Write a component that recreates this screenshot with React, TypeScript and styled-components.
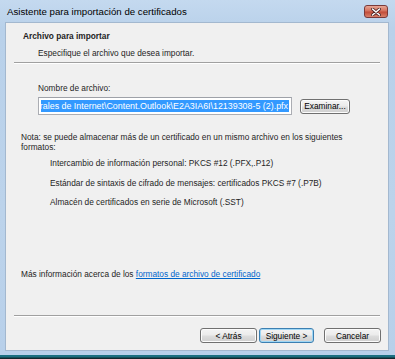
import React from "react";
import styled, { createGlobalStyle } from "styled-components";

const GlobalStyle = createGlobalStyle`
  html, body {
    margin: 0;
    padding: 0;
    background: #1b1b1b;
  }
  body {
    font-family: "Liberation Sans", Arial, sans-serif;
    font-size: 8.3px;
    color: #1e1e1e;
  }
`;

const formats = [
  "Intercambio de información personal: PKCS #12 (.PFX,.P12)",
  "Estándar de sintaxis de cifrado de mensajes: certificados PKCS #7 (.P7B)",
  "Almacén de certificados en serie de Microsoft (.SST)",
];

export default function App() {
  return (
    <>
      <GlobalStyle />
      <Window>
        <TitleBar>
          <Title>Asistente para importación de certificados</Title>
          <CloseButton>
            <svg width="10" height="8" viewBox="0 0 10 8">
              <path d="M1.5 1 L8.5 7 M8.5 1 L1.5 7" stroke="#4a2020" strokeWidth="3" strokeLinecap="round" />
              <path d="M1.5 1 L8.5 7 M8.5 1 L1.5 7" stroke="#ffffff" strokeWidth="1.6" strokeLinecap="round" />
            </svg>
          </CloseButton>
        </TitleBar>
        <Client>
          <Header>
            <HeaderTitle>Archivo para importar</HeaderTitle>
            <HeaderText>Especifique el archivo que desea importar.</HeaderText>
          </Header>
          <Separator />
          <Body>
            <FieldLabel>Nombre de archivo:</FieldLabel>
            <FieldRow>
              <FileInput>
                <Selected>rales de Internet\Content.Outlook\E2A3IA6I\12139308-5 (2).pfx</Selected>
              </FileInput>
              <Button $width={50}>Examinar...</Button>
            </FieldRow>
            <Note>
              Nota: se puede almacenar más de un certificado en un mismo archivo en los siguientes formatos:
            </Note>
            <FormatList>
              {formats.map((f) => (
                <FormatItem key={f}>{f}</FormatItem>
              ))}
            </FormatList>
            <MoreInfo>
              Más información acerca de los <Link>formatos de archivo de certificado</Link>
            </MoreInfo>
          </Body>
          <Separator />
          <Footer>
            <Button $width={57}>&lt; Atrás</Button>
            <Button $width={55} $focused>
              Siguiente &gt;
            </Button>
            <Button $width={57} $gap={8}>
              Cancelar
            </Button>
          </Footer>
        </Client>
      </Window>
      <Taskbar />
    </>
  );
}

const Window = styled.div`
  width: 395px;
  height: 355px;
  box-sizing: border-box;
  display: flex;
  flex-direction: column;
  background: linear-gradient(180deg, #c4d9ef 0%, #b9d1ea 8%, #bcd3eb 60%, #b8d0ea 100%);
  padding: 0 6px 4px 5px;
`;

const TitleBar = styled.div`
  height: 22px;
  display: flex;
  align-items: flex-start;
  justify-content: space-between;
`;

const Title = styled.div`
  font-size: 9.7px;
  color: #000;
  padding: 6px 0 0 2px;
  line-height: 12px;
`;

const CloseButton = styled.div`
  width: 24px;
  height: 13px;
  margin: 5px 1px 0 0;
  box-sizing: border-box;
  border: 1px solid #7a3a3a;
  border-radius: 3px;
  background: linear-gradient(180deg, #e7a695 0%, #d4705c 45%, #c24d3a 55%, #d8806a 100%);
  display: flex;
  align-items: center;
  justify-content: center;
`;

const Client = styled.div`
  flex: 1;
  background: #f0f0f0;
  display: flex;
  flex-direction: column;
  border: 1px solid #a3b8cf;
  box-sizing: border-box;
`;

const Header = styled.div`
  height: 39px;
  padding: 8px 0 0 17px;
  box-sizing: border-box;
`;

const HeaderTitle = styled.div`
  font-weight: bold;
  line-height: 10px;
  font-size: 8.3px;
`;

const HeaderText = styled.div`
  line-height: 10px;
  margin: 7px 0 0 15px;
`;

const Separator = styled.div`
  height: 1px;
  margin: 0 8px 0 8px;
  background: #a0a0a0;
  border-bottom: 1px solid #ffffff;
`;

const Body = styled.div`
  flex: 1;
  padding: 19px 0 0 15px;
`;

const FieldLabel = styled.div`
  line-height: 10px;
  margin-left: 17px;
`;

const FieldRow = styled.div`
  display: flex;
  align-items: center;
  gap: 8px;
  margin: 4px 0 0 17px;
`;

const FileInput = styled.div`
  width: 254px;
  height: 18px;
  box-sizing: border-box;
  border: 1px solid #abadb3;
  border-top-color: #9ea1a8;
  background: #fff;
  padding: 2px 2px;
  display: flex;
`;

const Selected = styled.div`
  flex: 1;
  background: #3399ff;
  color: #fff;
  font-size: 8.9px;
  line-height: 12px;
  white-space: nowrap;
  overflow: hidden;
  display: flex;
  justify-content: flex-end;
  padding-right: 1px;
`;

const Button = styled.div<{ $width: number; $focused?: boolean; $gap?: number }>`
  width: ${(p) => p.$width}px;
  height: 15px;
  box-sizing: border-box;
  margin-left: ${(p) => p.$gap ?? 0}px;
  border: 1px solid ${(p) => (p.$focused ? "#3c7fb1" : "#707070")};
  border-radius: 3px;
  background: linear-gradient(180deg, #f4f4f4 0%, #ebebeb 48%, #dddddd 52%, #cfcfcf 100%);
  box-shadow: inset 0 0 0 1px ${(p) => (p.$focused ? "#9fd7f5" : "#fcfcfc")};
  display: flex;
  align-items: center;
  justify-content: center;
  color: #000;
  line-height: 10px;
`;

const Note = styled.div`
  margin-top: 17px;
  line-height: 10px;
  width: 330px;
`;

const FormatList = styled.div`
  display: flex;
  flex-direction: column;
  gap: 9.5px;
  margin: 6px 0 0 29px;
`;

const FormatItem = styled.div`
  line-height: 10px;
`;

const MoreInfo = styled.div`
  margin-top: 62px;
  line-height: 10px;
`;

const Link = styled.span`
  color: #0066cc;
  text-decoration: underline;
`;

const Footer = styled.div`
  height: 33px;
  box-sizing: border-box;
  display: flex;
  justify-content: flex-end;
  align-items: flex-start;
  gap: 2px;
  padding: 11px 7px 0 0;
`;

const Taskbar = styled.div`
  height: 4px;
  background: linear-gradient(180deg, #1b6f80 0%, #1b6f80 40%, #101418 100%);
`;
